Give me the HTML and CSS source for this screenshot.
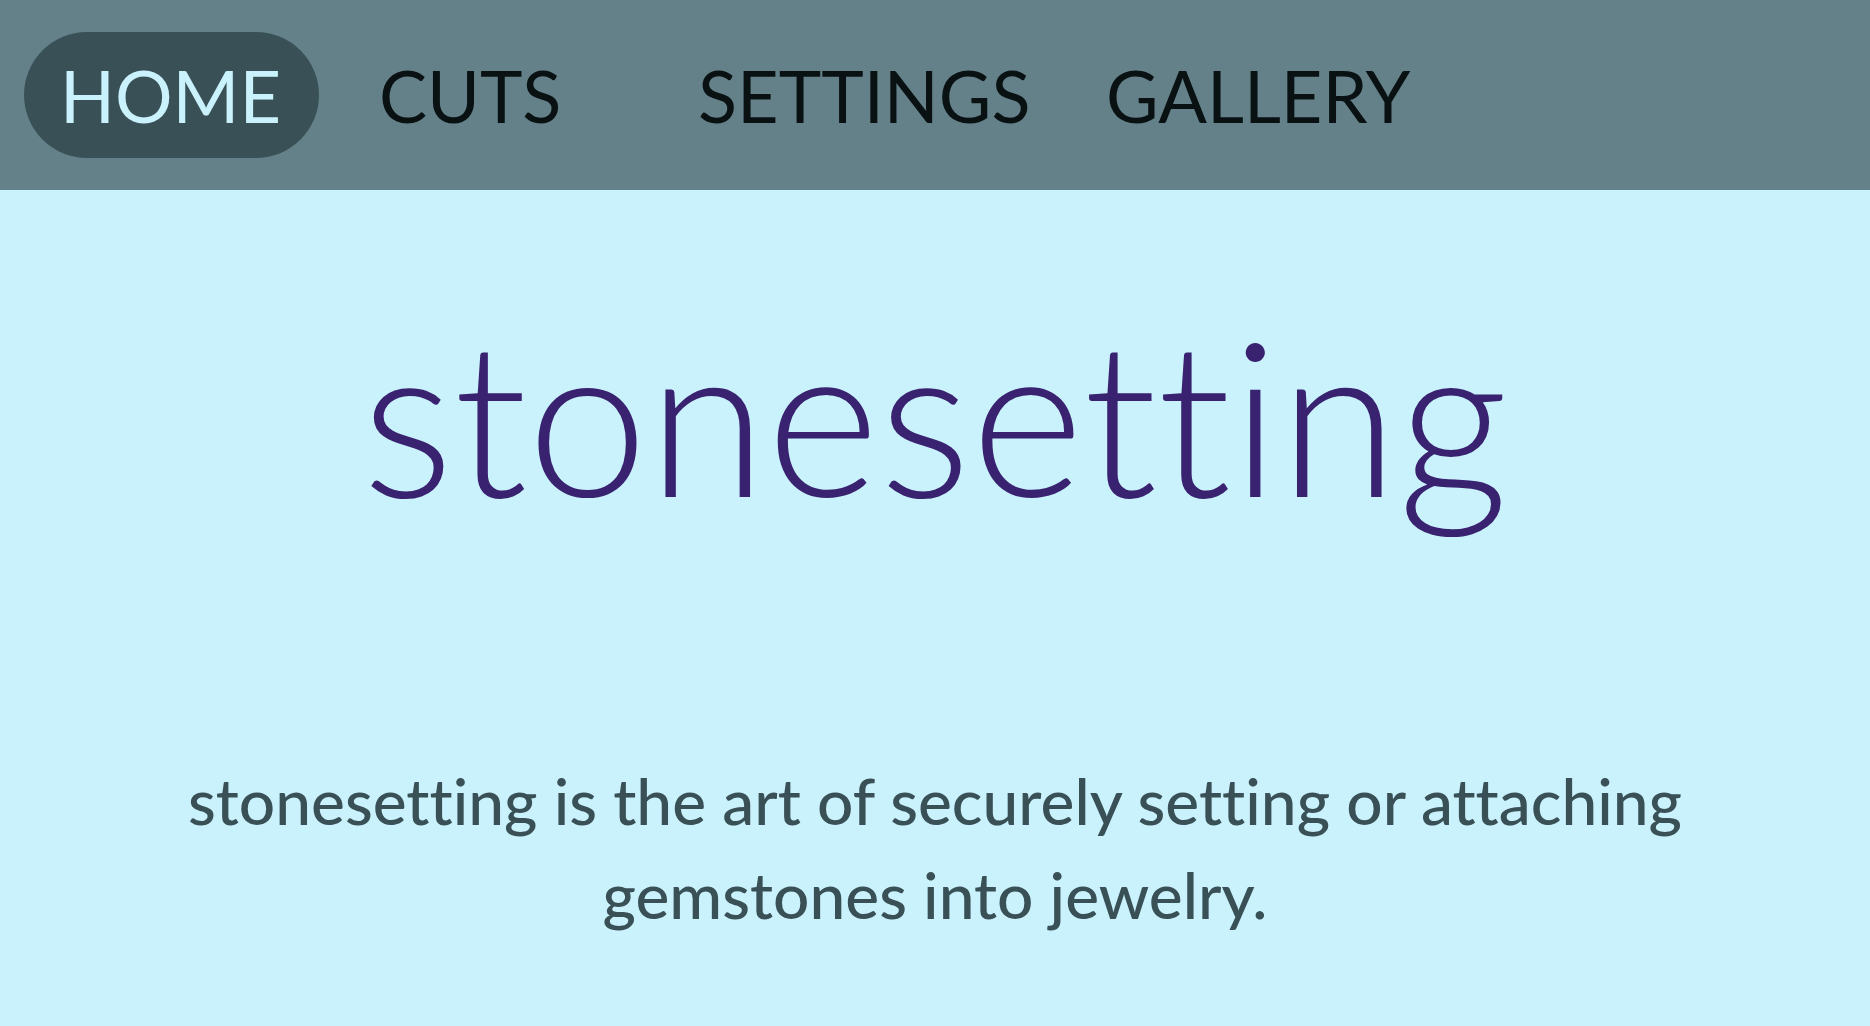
FILE: index.html
```html
<!DOCTYPE html>
<html lang="en">
<head>
<meta charset="utf-8">
<meta name="viewport" content="width=device-width, initial-scale=1">
<title>stonesetting</title>
<link rel="stylesheet" href="styles.css">
</head>
<body>
<nav class="nav" aria-label="Main">
  <a class="nav-link active" href="#home" aria-current="page">HOME</a>
  <a class="nav-link" href="#cuts">CUTS</a>
  <a class="nav-link" href="#settings">SETTINGS</a>
  <a class="nav-link" href="#gallery">GALLERY</a>
</nav>
<main class="main">
  <h1 class="title">stonesetting</h1>
  <p class="intro">stonesetting is the art of securely setting or attaching gemstones into jewelry.</p>
</main>
</body>
</html>
```

FILE: styles.css
```css
* {
  box-sizing: border-box;
}

body {
  margin: 0;
  background: #caf2fc;
  color: #395057;
  font-family: Lato, sans-serif;
  font-variant-ligatures: none;
}

.nav {
  display: grid;
  grid-template-columns: 295px 295px 384px auto;
  justify-content: start;
  gap: 24px;
  padding: 32px 24px;
  background: #64818a;
}

.nav-link {
  padding: 0 36px;
  border-radius: 63px;
  color: #091112;
  font-size: 72px;
  font-weight: 400;
  line-height: 126px;
  text-decoration: none;
}

.nav-link.active {
  background: #395057;
  color: #caf2fc;
}

.main {
  padding: 84px 160px;
  text-align: center;
}

.title {
  margin: 0 0 200px;
  color: #39226f;
  font-size: 216px;
  font-weight: 300;
  line-height: 280px;
}

.intro {
  margin: 0;
  font-size: 64px;
  font-weight: 500;
  line-height: 94px;
}
```
